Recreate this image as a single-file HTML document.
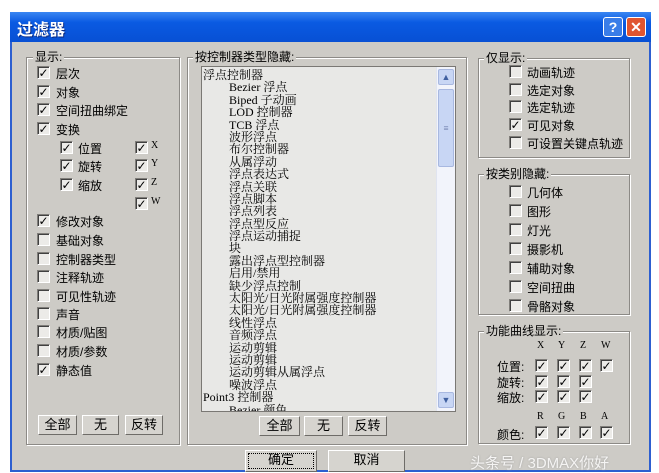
<!DOCTYPE html><html><head><meta charset="utf-8"><style>
*{margin:0;padding:0;box-sizing:border-box}
body{width:659px;height:464px;background:#fff;position:relative;overflow:hidden;font-family:"Liberation Sans","Noto Sans CJK SC",sans-serif;font-size:12px;color:#000}
.a{position:absolute;white-space:nowrap}
.win{position:absolute;left:10px;top:12px;width:641px;height:460px;background:#cdcbc6;border:2px solid #2d5fd0;border-top:none}
.title{position:absolute;left:10px;top:12px;width:641px;height:30px;background:linear-gradient(#3a86f2,#0a5ae2 35%,#0850d4)}
.grp{position:absolute;border:1px solid #8c8a86;box-shadow:1px 1px 0 #fff, inset 1px 1px 0 #fff}
.lg{position:absolute;background:#cdcbc6;padding:0 2px;line-height:13px}
.cb{position:absolute;width:13px;height:13px;background:#ecebe8;border:1px solid;border-color:#807e7a #fff #fff #807e7a;box-shadow:inset 1px 1px 0 #404040;font-size:12px;line-height:12px;text-align:center;font-weight:bold;font-family:"DejaVu Sans",sans-serif}
.btn{position:absolute;height:20px;background:#d6d4cf;border:1px solid;border-color:#fff #6e6c68 #6e6c68 #fff;text-align:center;line-height:18px;font-size:13px}
.list{position:absolute;left:201px;top:66px;width:255px;height:346px;background:#e8e8e6;border:1px solid #7a7874;overflow:hidden;font-family:"Liberation Serif","Noto Serif CJK SC",serif;font-size:12px;line-height:12.4px}
.list div{white-space:nowrap;height:12.4px}
.in{padding-left:26px}
</style></head><body>
<div class="win"></div>
<div class="title"></div>
<div class="a" style="left:17px;top:16px;color:#fff;font-size:16px;font-weight:bold;text-shadow:1px 1px 0 #0a2a80">过滤器</div>
<div class="a" style="left:603px;top:17px;width:20px;height:20px;background:#3a7de8;border:1px solid #fff;border-radius:3px;color:#fff;font-weight:bold;text-align:center;line-height:18px;font-size:14px">?</div>
<div class="a" style="left:626px;top:17px;width:20px;height:20px;background:#e05530;border:1px solid #fff;border-radius:3px;color:#fff;font-weight:bold;text-align:center;line-height:18px;font-size:14px">✕</div>

<div class="grp" style="left:26px;top:57px;width:154px;height:388px"></div>
<div class="lg" style="left:33px;top:51px">显示:</div>
<div class="cb" style="left:37px;top:66px">✓</div><div class="a" style="left:56px;top:65px">层次</div>
<div class="cb" style="left:37px;top:85px">✓</div><div class="a" style="left:56px;top:84px">对象</div>
<div class="cb" style="left:37px;top:103px">✓</div><div class="a" style="left:56px;top:102px">空间扭曲绑定</div>
<div class="cb" style="left:37px;top:122px">✓</div><div class="a" style="left:56px;top:121px">变换</div>
<div class="cb" style="left:60px;top:141px">✓</div><div class="a" style="left:78px;top:140px">位置</div>
<div class="cb" style="left:60px;top:159px">✓</div><div class="a" style="left:78px;top:158px">旋转</div>
<div class="cb" style="left:60px;top:178px">✓</div><div class="a" style="left:78px;top:177px">缩放</div>
<div class="cb" style="left:135px;top:141px">✓</div><div class="a" style="left:151px;top:140px;font-family:'Liberation Serif',serif;font-size:10px">X</div>
<div class="cb" style="left:135px;top:159px">✓</div><div class="a" style="left:151px;top:158px;font-family:'Liberation Serif',serif;font-size:10px">Y</div>
<div class="cb" style="left:135px;top:178px">✓</div><div class="a" style="left:151px;top:177px;font-family:'Liberation Serif',serif;font-size:10px">Z</div>
<div class="cb" style="left:135px;top:197px">✓</div><div class="a" style="left:151px;top:196px;font-family:'Liberation Serif',serif;font-size:10px">W</div>
<div class="cb" style="left:37px;top:214px">✓</div><div class="a" style="left:56px;top:213px">修改对象</div>
<div class="cb" style="left:37px;top:233px"></div><div class="a" style="left:56px;top:232px">基础对象</div>
<div class="cb" style="left:37px;top:252px"></div><div class="a" style="left:56px;top:251px">控制器类型</div>
<div class="cb" style="left:37px;top:270px"></div><div class="a" style="left:56px;top:269px">注释轨迹</div>
<div class="cb" style="left:37px;top:289px"></div><div class="a" style="left:56px;top:288px">可见性轨迹</div>
<div class="cb" style="left:37px;top:307px"></div><div class="a" style="left:56px;top:306px">声音</div>
<div class="cb" style="left:37px;top:325px"></div><div class="a" style="left:56px;top:324px">材质/贴图</div>
<div class="cb" style="left:37px;top:344px"></div><div class="a" style="left:56px;top:343px">材质/参数</div>
<div class="cb" style="left:37px;top:363px">✓</div><div class="a" style="left:56px;top:362px">静态值</div>
<div class="btn" style="left:38px;top:415px;width:39px">全部</div>
<div class="btn" style="left:82px;top:415px;width:37px">无</div>
<div class="btn" style="left:125px;top:415px;width:38px">反转</div>

<div class="grp" style="left:187px;top:57px;width:280px;height:388px"></div>
<div class="lg" style="left:193px;top:51px">按控制器类型隐藏:</div>
<div class="list"><div style="padding:2px 0 0 1px">
<div>浮点控制器</div>
<div class="in">Bezier 浮点</div><div class="in">Biped 子动画</div><div class="in">LOD 控制器</div><div class="in">TCB 浮点</div><div class="in">波形浮点</div><div class="in">布尔控制器</div><div class="in">从属浮动</div><div class="in">浮点表达式</div><div class="in">浮点关联</div><div class="in">浮点脚本</div><div class="in">浮点列表</div><div class="in">浮点型反应</div><div class="in">浮点运动捕捉</div><div class="in">块</div><div class="in">露出浮点型控制器</div><div class="in">启用/禁用</div><div class="in">缺少浮点控制</div><div class="in">太阳光/日光附属强度控制器</div><div class="in">太阳光/日光附属强度控制器</div><div class="in">线性浮点</div><div class="in">音频浮点</div><div class="in">运动剪辑</div><div class="in">运动剪辑</div><div class="in">运动剪辑从属浮点</div><div class="in">噪波浮点</div>
<div>Point3 控制器</div><div class="in">Bezier 颜色</div></div>
<div style="position:absolute;left:234px;top:0;width:19px;height:344px;background:#f2f4fb;border-left:1px solid #e0e4f0">
<div style="position:absolute;left:1px;top:2px;width:16px;height:16px;background:#c8d6f4;border:1px solid #a8b8e0;border-radius:2px;font-size:9px;line-height:14px;text-align:center;color:#4060a0">▲</div>
<div style="position:absolute;left:1px;top:22px;width:16px;height:78px;background:#c8d6f4;border:1px solid #a8b8e0;border-radius:2px;font-size:9px;line-height:76px;text-align:center;color:#6070a0">≡</div>
<div style="position:absolute;left:1px;top:325px;width:16px;height:16px;background:#c8d6f4;border:1px solid #a8b8e0;border-radius:2px;font-size:9px;line-height:14px;text-align:center;color:#4060a0">▼</div>
</div></div>
<div class="btn" style="left:259px;top:416px;width:41px">全部</div>
<div class="btn" style="left:304px;top:416px;width:39px">无</div>
<div class="btn" style="left:348px;top:416px;width:39px">反转</div>

<div class="grp" style="left:478px;top:58px;width:152px;height:100px"></div>
<div class="lg" style="left:484px;top:52px">仅显示:</div>
<div class="cb" style="left:509px;top:65px"></div><div class="a" style="left:527px;top:64px">动画轨迹</div>
<div class="cb" style="left:509px;top:83px"></div><div class="a" style="left:527px;top:82px">选定对象</div>
<div class="cb" style="left:509px;top:100px"></div><div class="a" style="left:527px;top:99px">选定轨迹</div>
<div class="cb" style="left:509px;top:118px">✓</div><div class="a" style="left:527px;top:117px">可见对象</div>
<div class="cb" style="left:509px;top:136px"></div><div class="a" style="left:527px;top:135px">可设置关键点轨迹</div>

<div class="grp" style="left:478px;top:174px;width:152px;height:141px"></div>
<div class="lg" style="left:484px;top:168px">按类别隐藏:</div>
<div class="cb" style="left:509px;top:185px"></div><div class="a" style="left:527px;top:184px">几何体</div>
<div class="cb" style="left:509px;top:204px"></div><div class="a" style="left:527px;top:203px">图形</div>
<div class="cb" style="left:509px;top:223px"></div><div class="a" style="left:527px;top:222px">灯光</div>
<div class="cb" style="left:509px;top:242px"></div><div class="a" style="left:527px;top:241px">摄影机</div>
<div class="cb" style="left:509px;top:261px"></div><div class="a" style="left:527px;top:260px">辅助对象</div>
<div class="cb" style="left:509px;top:280px"></div><div class="a" style="left:527px;top:279px">空间扭曲</div>
<div class="cb" style="left:509px;top:299px"></div><div class="a" style="left:527px;top:298px">骨骼对象</div>

<div class="grp" style="left:478px;top:331px;width:152px;height:113px"></div>
<div class="lg" style="left:484px;top:325px">功能曲线显示:</div>
<div style="font-family:'Liberation Serif',serif;font-size:10px">
<div class="a" style="left:537px;top:340px">X</div><div class="a" style="left:558px;top:340px">Y</div><div class="a" style="left:580px;top:340px">Z</div><div class="a" style="left:601px;top:340px">W</div>
<div class="a" style="left:537px;top:411px">R</div><div class="a" style="left:558px;top:411px">G</div><div class="a" style="left:580px;top:411px">B</div><div class="a" style="left:601px;top:411px">A</div></div>
<div class="a" style="left:497px;top:358px">位置:</div>
<div class="a" style="left:497px;top:374px">旋转:</div>
<div class="a" style="left:497px;top:389px">缩放:</div>
<div class="a" style="left:497px;top:426px">颜色:</div>
<div class="cb" style="left:535px;top:359px">✓</div><div class="cb" style="left:557px;top:359px">✓</div><div class="cb" style="left:579px;top:359px">✓</div><div class="cb" style="left:600px;top:359px">✓</div>
<div class="cb" style="left:535px;top:375px">✓</div><div class="cb" style="left:557px;top:375px">✓</div><div class="cb" style="left:579px;top:375px">✓</div>
<div class="cb" style="left:535px;top:390px">✓</div><div class="cb" style="left:557px;top:390px">✓</div><div class="cb" style="left:579px;top:390px">✓</div>
<div class="cb" style="left:535px;top:426px">✓</div><div class="cb" style="left:557px;top:426px">✓</div><div class="cb" style="left:579px;top:426px">✓</div><div class="cb" style="left:600px;top:426px">✓</div>

<div class="btn" style="left:245px;top:450px;width:72px;height:22px;outline:1px dotted #000;outline-offset:-4px">确定</div>
<div class="btn" style="left:328px;top:450px;width:77px;height:22px">取消</div>
<div class="a" style="left:470px;top:452px;color:#fff;font-size:15px;opacity:.8;text-shadow:0 0 2px #999">头条号 / 3DMAX你好</div>
</body></html>
